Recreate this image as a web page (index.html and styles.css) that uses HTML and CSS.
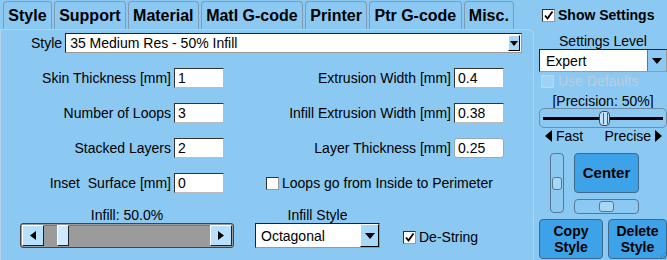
FILE: index.html
```html
<!DOCTYPE html>
<html>
<head>
<meta charset="utf-8">
<link rel="stylesheet" href="styles.css">
</head>
<body>
<div class="app">
  <div class="left">
    <div class="tabs">
      <div class="tab active">Style</div>
      <div class="tab">Support</div>
      <div class="tab">Material</div>
      <div class="tab">Matl G-code</div>
      <div class="tab">Printer</div>
      <div class="tab">Ptr G-code</div>
      <div class="tab">Misc.</div>
    </div>
    <div class="panel">
      <div class="style-row">
        <span>Style</span>
        <div class="select wide"><span>35 Medium Res - 50% Infill</span><span class="arrow"></span></div>
      </div>
      <div class="fields">
        <span class="fl">Skin Thickness [mm]</span><div class="inp">1</div>
        <span class="fl">Extrusion Width [mm]</span><div class="inp">0.4</div>
        <span class="fl">Number of Loops</span><div class="inp">3</div>
        <span class="fl">Infill Extrusion Width [mm]</span><div class="inp">0.38</div>
        <span class="fl">Stacked Layers</span><div class="inp">2</div>
        <span class="fl">Layer Thickness [mm]</span><div class="inp round">0.25</div>
        <span class="fl">Inset&nbsp; Surface [mm]</span><div class="inp">0</div>
        <div class="loops"><span class="cb"></span><span>Loops go from Inside to Perimeter</span></div>
      </div>
      <div class="bottom">
        <div class="grp g1">
          <span class="cap">Infill: 50.0%</span>
          <div class="scroll">
            <span class="sbtn"><svg width="6" height="9" viewBox="0 0 6 9"><path d="M6 0V9L0 4.5Z" fill="#000"/></svg></span>
            <span class="strack"><span class="sthumb"></span></span>
            <span class="sbtn"><svg width="6" height="9" viewBox="0 0 6 9"><path d="M0 0V9L6 4.5Z" fill="#000"/></svg></span>
          </div>
        </div>
        <div class="grp g2">
          <span class="cap">Infill Style</span>
          <div class="select oct"><span>Octagonal</span><span class="arrow big"></span></div>
        </div>
        <div class="destring"><span class="cb on"><svg width="11" height="11" viewBox="0 0 11 11"><path d="M2 5.5L4.5 8.5L9.5 1.5" fill="none" stroke="#000" stroke-width="1.8"/></svg></span><span>De-String</span></div>
      </div>
    </div>
  </div>
  <div class="right">
    <div class="show"><span class="cb on"><svg width="11" height="11" viewBox="0 0 11 11"><path d="M2 5.5L4.5 8.5L9.5 1.5" fill="none" stroke="#000" stroke-width="1.8"/></svg></span><span>Show Settings</span></div>
    <div class="level">Settings Level</div>
    <div class="select expert"><span>Expert</span><span class="arrow big dark"></span></div>
    <div class="usedef"><span class="cb dis"></span><span>Use Defaults</span></div>
    <div class="prec">[Precision: 50%]</div>
    <div class="pslider"><span class="pline"></span><span class="pthumb"></span></div>
    <div class="fastrow">
      <span class="fp"><svg width="7" height="12" viewBox="0 0 7 12"><path d="M7 0V12L0 6Z" fill="#000"/></svg>&nbsp;Fast</span>
      <span class="fp">Precise&nbsp;<svg width="7" height="12" viewBox="0 0 7 12"><path d="M0 0V12L7 6Z" fill="#000"/></svg></span>
    </div>
    <div class="controls">
      <div class="vslider"><span class="vthumb"></span></div>
      <div class="ccol">
        <div class="btn center">Center</div>
        <div class="hslider"><span class="hthumb"></span></div>
      </div>
    </div>
    <div class="btns">
      <div class="btn copy">Copy<br>Style</div>
      <div class="btn del">Delete<br>Style</div>
    </div>
  </div>
  <svg class="grip" width="10" height="10" viewBox="0 0 10 10"><path d="M9 2L2 9M9 5L5 9M9 8L8 9" stroke="#5d7f99" stroke-width="1"/></svg>
</div>
</body>
</html>
```
FILE: styles.css
```css
* { box-sizing: border-box; margin: 0; padding: 0; }
body {
  margin: 0;
  background: #8bc9f3;
  font-family: "Liberation Sans", Arial, sans-serif;
  font-size: 14px;
  color: #000;
  width: 667px;
  height: 260px;
  overflow: hidden;
}
.app { display: flex; height: 260px; position: relative; }
.left { width: 534px; display: flex; flex-direction: column; }

.tabs { display: flex; gap: 2px; padding-left: 3px; height: 29px; align-items: flex-end; }
.tab {
  height: 28px;
  border: 1px solid #7f9bb2;
  border-bottom: none;
  border-radius: 4px 4px 0 0;
  padding: 0 4.3px;
  font-weight: bold;
  font-size: 16px;
  line-height: 27px;
}

.panel {
  flex: 1;
  border: 1px solid #b4d2e8;
  border-bottom: none;
  border-top-right-radius: 6px;
  padding-top: 3px;
}

.style-row { display: flex; align-items: center; gap: 3px; padding-left: 30px; height: 20px; }

.select {
  background: #fff;
  border: 1px solid;
  border-color: #222 #999 #999 #222;
  display: flex;
  align-items: center;
  justify-content: space-between;
  padding-left: 4px;
}
.select.wide { width: 457px; height: 20px; }
.arrow {
  width: 12px;
  height: 16px;
  background: #a8d8f8;
  border: 1px solid;
  border-color: #fff #000 #000 #fff;
  display: flex;
  align-items: center;
  justify-content: center;
  margin-right: 1px;
}
.arrow::after {
  content: "";
  border-left: 4px solid transparent;
  border-right: 4px solid transparent;
  border-top: 5px solid #000;
}
.arrow.big { width: 19px; margin-right: 0; align-self: stretch; height: auto; }
.arrow.big::after { border-left-width: 5px; border-right-width: 5px; border-top-width: 6px; }
.arrow.dark { background: #8bc9f3; border-color: #5a7890; border-width: 0 0 0 1px; }

.fields {
  display: grid;
  grid-template-columns: 170px 50px 224px 50px;
  column-gap: 3px;
  row-gap: 15px;
  grid-auto-rows: 20px;
  margin-top: 15px;
  align-items: center;
}
.fl { text-align: right; white-space: nowrap; }
.inp {
  height: 20px;
  background: #fff;
  border: 1px solid;
  border-color: #333 #bbb #bbb #333;
  padding-left: 3px;
  line-height: 18px;
}
.inp.round { border: 1px solid #9aa; border-radius: 3px; }
.loops { grid-column: 3 / span 2; display: flex; align-items: center; gap: 3px; padding-left: 39px; }

.cb {
  width: 13px;
  height: 13px;
  background: #fff;
  border: 1px solid;
  border-color: #333 #999 #999 #333;
  display: inline-flex;
  align-items: center;
  justify-content: center;
  flex: none;
}
.cb.dis { border-color: #c4d6e4; background: #9fd2f5; }

.bottom { display: flex; align-items: flex-end; margin-top: 14px; padding-left: 19px; }
.grp { display: flex; flex-direction: column; align-items: center; }
.cap { line-height: 16px; }
.g1 { width: 214px; }
.g2 { width: 125px; margin-left: 21px; }
.scroll {
  width: 214px;
  height: 25px;
  border: 1px solid #444;
  border-radius: 3px;
  background: #9b9b9b;
  display: flex;
  padding: 1px;
}
.sbtn {
  width: 22px;
  background: #b6e0fb;
  border: 1px solid;
  border-color: #fff #222 #222 #fff;
  display: flex;
  align-items: center;
  justify-content: center;
}
.strack { flex: 1; position: relative; border-top: 1px solid #777; }
.sthumb {
  position: absolute;
  left: 13px;
  top: -1px;
  bottom: 0;
  width: 12px;
  background: #cfeafc;
  border: 1px solid;
  border-color: #fff #222 #222 #fff;
}
.select.oct { width: 125px; height: 25px; padding-left: 5px; }
.destring { margin-left: 23px; margin-bottom: 3px; display: flex; align-items: center; gap: 3px; }

.right { width: 133px; padding-left: 5px; display: flex; flex-direction: column; }
.show { display: flex; align-items: center; gap: 3px; margin-top: 7px; margin-left: 3px; font-weight: bold; height: 16px; }
.level { margin-top: 10px; text-align: center; line-height: 16px; }
.select.expert { width: 128px; height: 23px; padding-left: 6px; }
.usedef { display: flex; align-items: center; gap: 4px; margin-top: 2px; margin-left: 2px; height: 14px; color: #bccdda; }
.prec { margin-top: 6px; text-align: center; line-height: 14px; }
.pslider {
  height: 20px;
  border: 1px solid #6d8ea8;
  border-radius: 5px;
  position: relative;
  display: flex;
  align-items: center;
  padding: 0 3px;
}
.pline { flex: 1; height: 3px; background: #000; }
.pthumb {
  position: absolute;
  left: 59px;
  top: 2px;
  width: 11px;
  height: 15px;
  background: #bfe4fb;
  border: 1px solid #445;
  border-radius: 4px;
}
.pthumb::after { content: ""; position: absolute; left: 3px; top: 1px; width: 3px; height: 11px; border-left: 1px solid #556; border-right: 1px solid #556; }
.fastrow { display: flex; justify-content: space-between; margin-top: 1px; padding: 0 5px 0 6px; line-height: 14px; }
.fp { display: flex; align-items: center; }
.controls { display: flex; margin-top: 10px; }
.vslider {
  width: 14px;
  height: 60px;
  margin-left: 11px;
  border: 1px solid #577690;
  border-radius: 4px;
  position: relative;
}
.vthumb { position: absolute; left: 1px; top: 23px; width: 10px; height: 13px; border: 1px solid #577690; border-radius: 3px; background: #a8d8f8; }
.ccol { margin-left: 10px; display: flex; flex-direction: column; }
.btn {
  background: #3ea2e9;
  border: 1px solid #3b6a8e;
  border-radius: 4px;
  font-weight: bold;
  display: flex;
  align-items: center;
  justify-content: center;
  text-align: center;
  line-height: 16px;
}
.center { width: 65px; height: 40px; font-size: 15px; }
.hslider {
  margin-top: 6px;
  width: 65px;
  height: 15px;
  border: 1px solid #577690;
  border-radius: 4px;
  position: relative;
}
.hthumb { position: absolute; left: 24px; top: 1px; width: 15px; height: 11px; border: 1px solid #577690; border-radius: 3px; background: #a8d8f8; }
.btns { display: flex; gap: 5px; margin-top: 5px; }
.copy { width: 64px; height: 40px; }
.del { width: 59px; height: 40px; }
.grip { position: absolute; right: 0; bottom: 0; }
```
